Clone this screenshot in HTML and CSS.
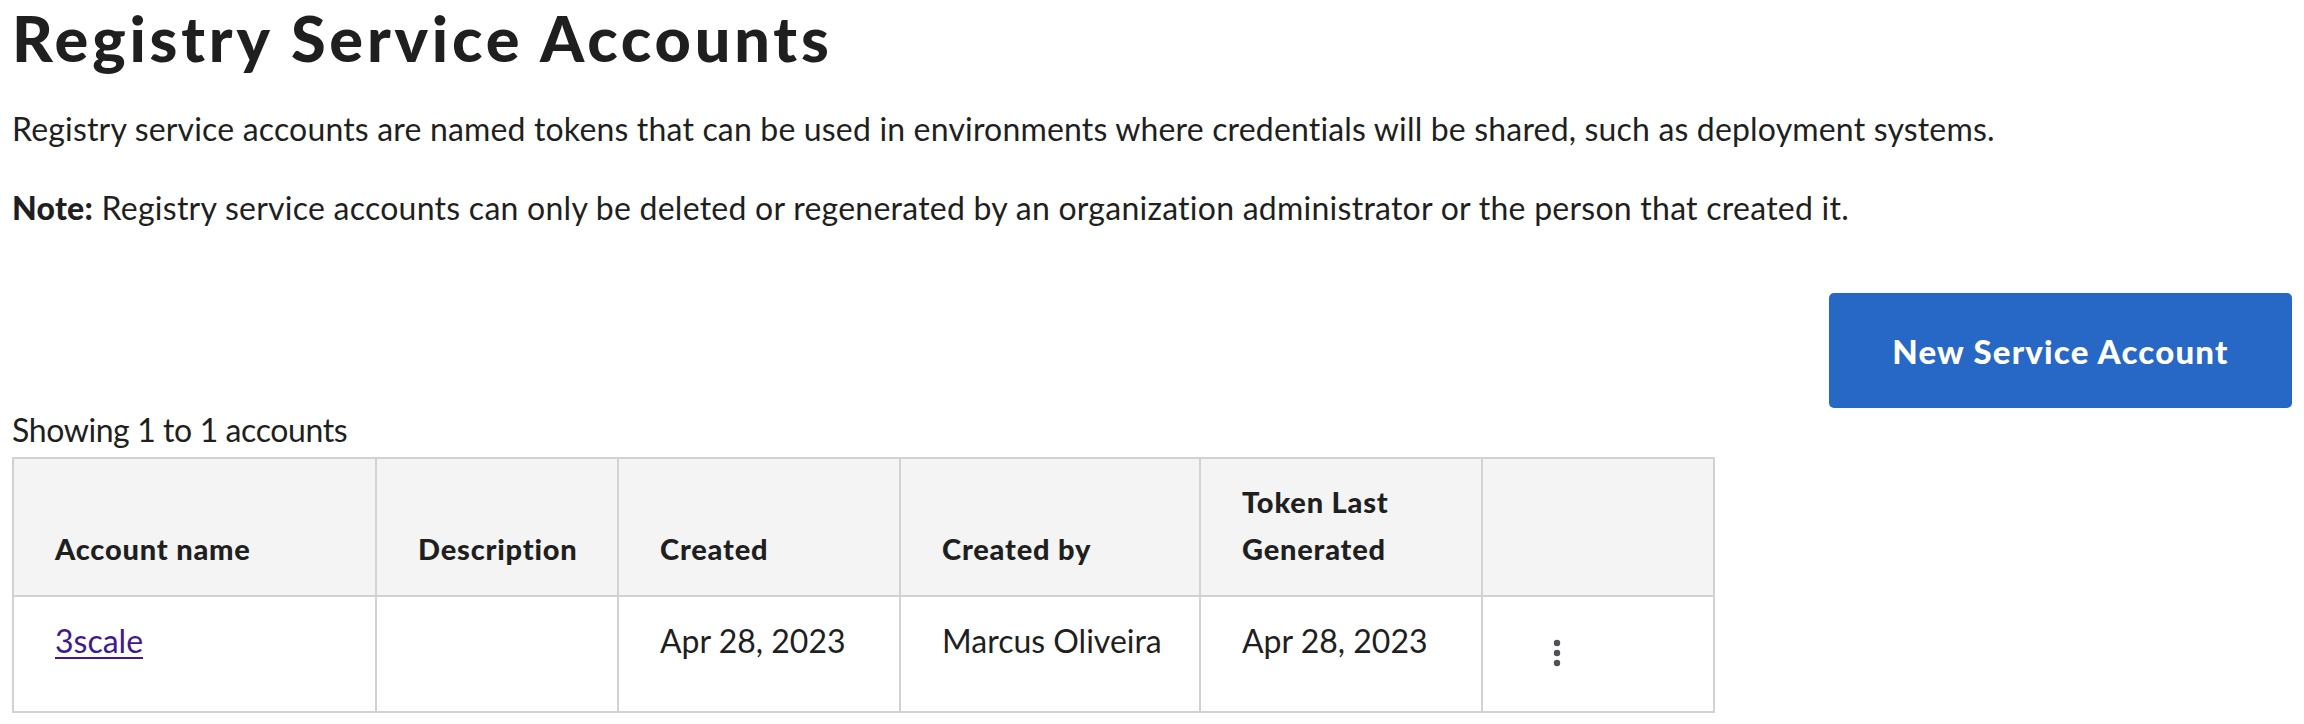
FILE: index.html
```html
<!DOCTYPE html>
<html lang="en">
<head>
<meta charset="utf-8">
<title>Registry Service Accounts</title>
<link rel="stylesheet" href="styles.css">
</head>
<body>
<main class="page">
  <h1 class="title">Registry Service Accounts</h1>
  <p class="intro">Registry service accounts are named tokens that can be used in environments where credentials will be shared, such as deployment systems.</p>
  <p class="note"><strong>Note:</strong> Registry service accounts can only be deleted or regenerated by an organization administrator or the person that created it.</p>
  <div class="toolbar">
    <button class="btn-primary" type="button">New Service Account</button>
  </div>
  <div class="count">Showing 1 to 1 accounts</div>
  <table class="accounts">
    <colgroup>
      <col class="c1"><col class="c2"><col class="c3"><col class="c4"><col class="c5"><col class="c6">
    </colgroup>
    <thead>
      <tr>
        <th>Account name</th>
        <th>Description</th>
        <th>Created</th>
        <th>Created by</th>
        <th>Token Last<br>Generated</th>
        <th></th>
      </tr>
    </thead>
    <tbody>
      <tr>
        <td><a class="acct-link" href="#">3scale</a></td>
        <td></td>
        <td>Apr 28, 2023</td>
        <td>Marcus Oliveira</td>
        <td>Apr 28, 2023</td>
        <td class="actions">
          <button class="kebab" type="button" aria-label="Actions">
            <svg width="8" height="28" viewBox="0 0 8 28" aria-hidden="true">
              <circle cx="4" cy="4" r="3.2" fill="#4f5255"/>
              <circle cx="4" cy="14" r="3.2" fill="#4f5255"/>
              <circle cx="4" cy="24" r="3.2" fill="#4f5255"/>
            </svg>
          </button>
        </td>
      </tr>
    </tbody>
  </table>
</main>
</body>
</html>
```

FILE: styles.css
```css
html, body {
  margin: 0;
  padding: 0;
  background: #ffffff;
}

body {
  font-family: Lato, "Liberation Sans", sans-serif;
  color: #151515;
}

.page {
  display: flex;
  flex-direction: column;
  padding: 0 12px;
}

.title {
  margin: 0;
  font-size: 63px;
  line-height: 76px;
  font-weight: 900;
  color: #1f1f1f;
  letter-spacing: 3.8px;
}

.intro,
.note {
  margin: 0;
  font-size: 32px;
  line-height: 48px;
  color: #1f1f1f;
  letter-spacing: 0.17px;
}

.intro {
  margin-top: 29px;
}

.note {
  margin-top: 31px;
  letter-spacing: 0.25px;
}

.note strong {
  font-weight: 900;
}

.toolbar {
  display: flex;
  justify-content: flex-end;
  margin-top: 61px;
}

.btn-primary {
  width: 463px;
  height: 115px;
  border: none;
  border-radius: 5px;
  background: #2767c6;
  color: #ffffff;
  font-family: Lato, "Liberation Sans", sans-serif;
  font-size: 33px;
  font-weight: 900;
  letter-spacing: 1.2px;
}

.count {
  margin-top: 3px;
  font-size: 32px;
  line-height: 38px;
  color: #1f1f1f;
  letter-spacing: -0.4px;
}

.accounts {
  margin-top: 8px;
  width: 1703px;
  table-layout: fixed;
  border-collapse: collapse;
  border: 2px solid #d2d2d2;
}

.c1 { width: 363px; }
.c2 { width: 242px; }
.c3 { width: 282px; }
.c4 { width: 300px; }
.c5 { width: 282px; }
.c6 { width: 232px; }

.accounts th,
.accounts td {
  border: 2px solid #d2d2d2;
  text-align: left;
  padding-left: 41px;
}

.accounts thead tr {
  height: 138px;
}

.accounts th {
  background: #f4f4f4;
  vertical-align: bottom;
  font-size: 29px;
  font-weight: 900;
  line-height: 47px;
  padding-bottom: 23px;
  color: #1f1f1f;
  letter-spacing: 0.8px;
}

.accounts tbody tr {
  height: 116px;
}

.accounts td {
  vertical-align: top;
  font-size: 32px;
  line-height: 48px;
  padding-top: 20px;
  color: #1f1f1f;
}

.acct-link {
  color: #3f1a8f;
  text-decoration: underline;
  text-decoration-thickness: 2px;
  text-underline-offset: 4px;
}

.accounts td.actions {
  padding-left: 0;
  padding-top: 0;
}

.kebab {
  display: block;
  margin: 42px 0 0 70px;
  padding: 0;
  border: none;
  background: transparent;
  line-height: 0;
}
```
